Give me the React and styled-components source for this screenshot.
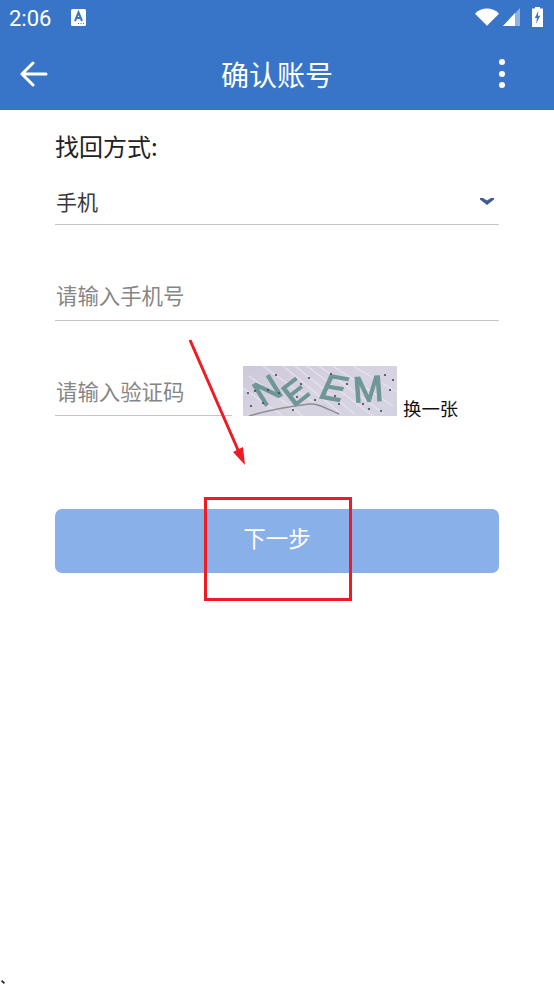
import React from "react"
import styled, { createGlobalStyle } from "styled-components"

const GlobalStyle = createGlobalStyle`
  html, body {
    margin: 0;
    padding: 0;
    background: #fff;
  }
  * {
    box-sizing: border-box;
  }
`

const speckles = [
  [5, 27], [8, 40], [20, 37], [25, 24], [33, 9], [36, 27], [54, 31], [58, 18], [66, 12], [72, 34], [88, 8],
  [92, 30], [96, 38], [104, 18], [120, 38], [126, 43], [142, 9], [147, 24], [150, 14], [138, 45], [50, 44], [12, 25],
]

const CaptchaImage = () => (
  <CaptchaSvg viewBox="0 0 154 50" width="154" height="50">
    <defs>
      <linearGradient id="cap" x1="0" y1="0" x2="1" y2="1">
        <stop offset="0" stopColor="#cdc8da" />
        <stop offset="0.5" stopColor="#d8d3e1" />
        <stop offset="1" stopColor="#d2d3e2" />
      </linearGradient>
      <filter id="soft" x="-5%" y="-5%" width="110%" height="110%">
        <feGaussianBlur stdDeviation="0.6" />
      </filter>
    </defs>
    <rect width="154" height="50" fill="url(#cap)" />
    <g filter="url(#soft)">
      <g stroke="#e9e5ec" strokeWidth="1.4" fill="none" opacity="0.85">
        <path d="M20 0 L70 36 M40 0 L96 46 M64 0 L130 50 M90 0 L150 40 M52 0 L112 48 M76 0 L140 47" />
        <path d="M0 22 L40 50 M110 0 L154 26 M6 10 L60 50" />
      </g>
      <g
        fill="#6f9798"
        stroke="#6f9798"
        strokeWidth="1.4"
        fontFamily="'Liberation Sans', sans-serif"
        textAnchor="middle"
        dominantBaseline="central"
      >
        <text fontSize="35" transform="translate(24 24) rotate(-32)">N</text>
        <text fontSize="33" transform="translate(52 26) rotate(-38)">E</text>
        <text fontSize="36" transform="translate(91 22) rotate(10) skewX(-14)">E</text>
        <text fontSize="36" transform="translate(125 23) rotate(-4)">M</text>
      </g>
      <path d="M6 50 C 26 44, 50 40, 66 38 C 74 37, 82 42, 96 48" stroke="#8d8f90" strokeWidth="1.5" fill="none" />
      <g fill="#4a4658">
        {speckles.map(([cx, cy], i) => (
          <circle key={i} cx={cx} cy={cy} r="1.1" />
        ))}
      </g>
    </g>
  </CaptchaSvg>
)

export default function App() {
  return (
    <Page>
      <GlobalStyle />
      <Header>
        <StatusBar>
          <StatusLeft>
            <Time>2:06</Time>
            <svg width="15" height="17" viewBox="0 0 15 17">
              <rect width="15" height="17" rx="1.5" fill="#fff" />
              <path d="M4 12 L7.5 3.5 L11 12 M5.5 9 H9.5" stroke="#3875c8" strokeWidth="2" fill="none" />
              <path d="M7 14.5h1M9.5 14.5h1M12 14.5h1" stroke="#3875c8" strokeWidth="1.2" />
            </svg>
          </StatusLeft>
          <StatusRight>
            <svg width="24" height="18" viewBox="0 0 25 18">
              <path d="M0 5.5 C 7 -1.5, 18 -1.5, 25 5.5 L12.5 18 Z" fill="#fff" />
            </svg>
            <svg width="17" height="18" viewBox="0 0 17 18">
              <path d="M17 0 V18 H0 Z" fill="#fff" opacity="0.45" />
              <path d="M12 5 V18 H0 Z" fill="#fff" />
            </svg>
            <BatterySvg width="11" height="20" viewBox="0 0 11 20">
              <path d="M3 0 H8 V1.5 H11 V20 H0 V1.5 H3 Z" fill="#fff" />
              <path d="M6.5 3.5 L2.8 11 H5 L4 17 L8.2 8.8 H5.8 Z" fill="#3875c8" />
            </BatterySvg>
          </StatusRight>
        </StatusBar>
        <AppBar>
          <svg width="28" height="26" viewBox="0 0 28 26">
            <path d="M26 13 H3 M13 2 L2 13 L13 24" stroke="#fff" strokeWidth="3" strokeLinecap="round" strokeLinejoin="round" fill="none" />
          </svg>
          <Title>确认账号</Title>
          <Dots>
            <Dot />
            <Dot />
            <Dot />
          </Dots>
        </AppBar>
      </Header>

      <Form>
        <Label>找回方式:</Label>
        <SelectRow>
          <SelectText>手机</SelectText>
          <svg width="14" height="7" viewBox="0 0 14 7">
            <path d="M0 0 H3 L7 2.5 L11 0 H14 V1.5 L7 7 L0 1.5 Z" fill="#3d5c96" />
          </svg>
        </SelectRow>
        <PhoneField>
          <Placeholder>请输入手机号</Placeholder>
        </PhoneField>
        <CodeRow>
          <CodeField>
            <Placeholder>请输入验证码</Placeholder>
          </CodeField>
          <CaptchaImage />
          <Refresh>换一张</Refresh>
        </CodeRow>
        <NextButton type="button">下一步</NextButton>
      </Form>

      <Arrow width="70" height="135" viewBox="0 0 70 135">
        <path d="M2 2 L50 112" stroke="#ed1c24" strokeWidth="3" fill="none" />
        <path d="M57 127 L45 114 L55 109 Z" fill="#ed1c24" />
      </Arrow>
      <Highlight />
      <CornerMark />
    </Page>
  )
}

const Page = styled.div`
  position: relative;
  width: 554px;
  height: 985px;
  overflow: hidden;
  background: #fff;
  font-family: "Noto Sans CJK SC", "Noto Sans", sans-serif;
`

const Header = styled.header`
  height: 110px;
  background: #3875c8;
  color: #fff;
`

const StatusBar = styled.div`
  height: 37px;
  padding: 0 11px 0 9px;
  display: flex;
  align-items: center;
  justify-content: space-between;
`

const StatusLeft = styled.div`
  display: flex;
  align-items: center;
  gap: 20px;
  svg {
    margin-top: -2px;
  }
`

const Time = styled.span`
  font-family: Roboto, sans-serif;
  font-size: 22px;
  line-height: 37px;
`

const StatusRight = styled.div`
  display: flex;
  align-items: center;
  gap: 4px;
  margin-top: -4px;
`

const BatterySvg = styled.svg`
  margin-left: 8px;
`

const AppBar = styled.div`
  position: relative;
  height: 73px;
  padding: 0 49px 0 20px;
  display: flex;
  align-items: center;
  justify-content: space-between;
`

const Title = styled.h1`
  margin: 0;
  font-size: 28px;
  font-weight: 400;
  line-height: 1;
  position: absolute;
  left: 0;
  right: 0;
  text-align: center;
`

const Dots = styled.div`
  display: flex;
  flex-direction: column;
  gap: 5.5px;
`

const Dot = styled.span`
  width: 6px;
  height: 6px;
  border-radius: 50%;
  background: #fff;
`

const Form = styled.main`
  padding: 0 55px;
`

const Label = styled.div`
  margin-top: 18px;
  height: 35px;
  font-size: 24px;
  line-height: 35px;
  color: #222;
`

const SelectRow = styled.div`
  margin-top: 25px;
  height: 37px;
  padding: 0 5px 10px 1px;
  border-bottom: 1px solid #c6c6c6;
  display: flex;
  align-items: center;
  justify-content: space-between;
`

const SelectText = styled.span`
  font-size: 21px;
  color: #3a3a3a;
`

const PhoneField = styled.div`
  margin-top: 50px;
  height: 46px;
  padding: 0 1px 6px;
  border-bottom: 1px solid #c6c6c6;
  display: flex;
  align-items: center;
`

const Placeholder = styled.span`
  font-size: 21.4px;
  color: #868686;
`

const CodeRow = styled.div`
  margin-top: 45px;
  height: 50px;
  display: flex;
  align-items: flex-end;
`

const CodeField = styled.div`
  width: 177px;
  height: 50px;
  padding: 0 1px;
  border-bottom: 1px solid #c6c6c6;
  display: flex;
  align-items: center;
  margin-right: 11px;
`

const CaptchaSvg = styled.svg`
  display: block;
  flex: none;
`

const Refresh = styled.span`
  margin-left: 6px;
  font-size: 18.4px;
  line-height: 26px;
  margin-bottom: -5px;
  color: #111;
`

const NextButton = styled.button`
  display: block;
  width: 100%;
  height: 64px;
  margin-top: 93px;
  padding: 0 0 8px;
  border: 0;
  border-radius: 7px;
  background: #8ab0e9;
  color: #fff;
  font-family: inherit;
  font-size: 22.5px;
`

const Arrow = styled.svg`
  position: absolute;
  left: 188px;
  top: 338px;
`

const Highlight = styled.div`
  position: absolute;
  left: 204px;
  top: 497px;
  width: 148px;
  height: 104px;
  border: 3px solid #ed1c24;
`

const CornerMark = styled.div`
  position: absolute;
  left: 1px;
  top: 981px;
  width: 4px;
  height: 2px;
  background: #333;
  transform: rotate(45deg);
`
